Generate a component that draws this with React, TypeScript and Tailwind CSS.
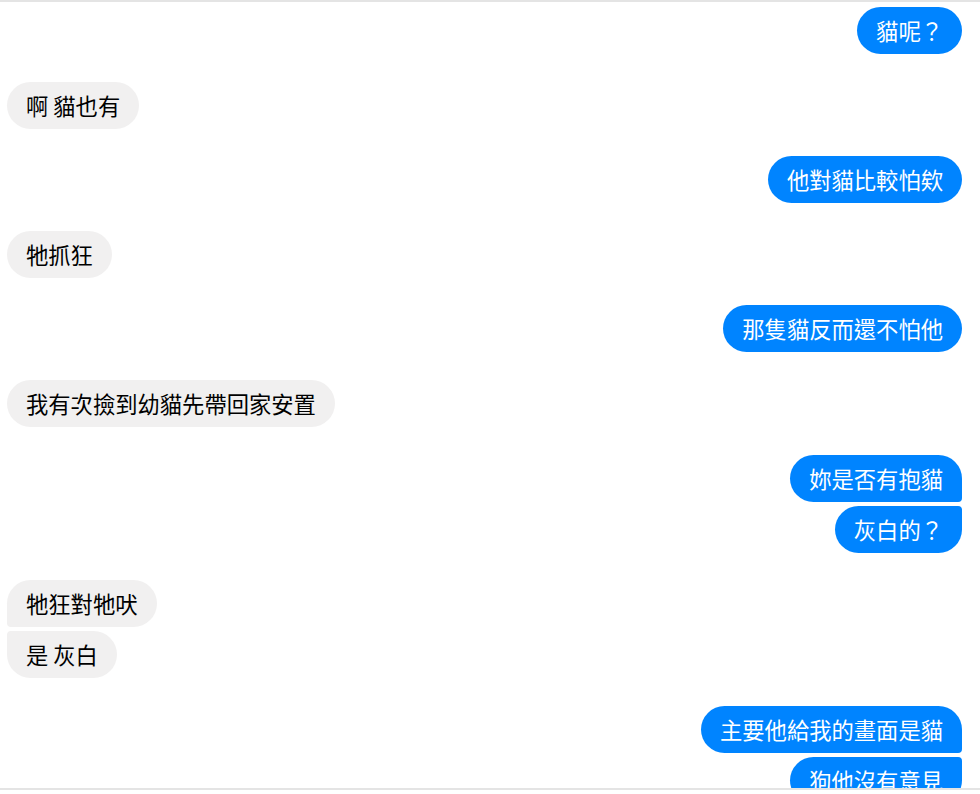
import React from "react";

type Msg = { me: boolean; lines: string[] };

const groups: Msg[] = [
  { me: true, lines: ["貓呢？"] },
  { me: false, lines: ["啊 貓也有"] },
  { me: true, lines: ["他對貓比較怕欸"] },
  { me: false, lines: ["牠抓狂"] },
  { me: true, lines: ["那隻貓反而還不怕他"] },
  { me: false, lines: ["我有次撿到幼貓先帶回家安置"] },
  { me: true, lines: ["妳是否有抱貓", "灰白的？"] },
  { me: false, lines: ["牠狂對牠吠", "是 灰白"] },
  { me: true, lines: ["主要他給我的畫面是貓", "狗他沒有意見"] },
];

function Bubble({ me, text, first, last }: { me: boolean; text: string; first: boolean; last: boolean }) {
  // corners that touch another bubble in the same group are squared off
  const corners = me
    ? `${first ? "rounded-tr-[24px]" : "rounded-tr-[4px]"} ${last ? "rounded-br-[24px]" : "rounded-br-[4px]"}`
    : `${first ? "rounded-tl-[24px]" : "rounded-tl-[4px]"} ${last ? "rounded-bl-[24px]" : "rounded-bl-[4px]"}`;
  return (
    <div
      className={`h-[47px] shrink-0 flex items-center px-[19px] rounded-[24px] ${corners} text-[22.3px] leading-[27px] whitespace-nowrap ${
        me ? "self-end bg-[#0084ff] text-white" : "self-start bg-[#f1f0f0] text-black"
      }`}
    >
      {text}
    </div>
  );
}

export default function App() {
  return (
    <div
      className="w-[980px] h-[794px] bg-white overflow-hidden"
      style={{ fontFamily: '"Noto Sans CJK TC", "Noto Sans", sans-serif' }}
    >
      <div className="h-[790px] border-t-2 border-b-2 border-[#e4e4e4] overflow-hidden">
        <div className="flex flex-col gap-[27.6px] pt-[5px] pl-[7px] pr-[18px]">
          {groups.map((g, i) => (
            <div key={i} className="flex flex-col gap-[4px]">
              {g.lines.map((t, j) => (
                <Bubble key={j} me={g.me} text={t} first={j === 0} last={j === g.lines.length - 1} />
              ))}
            </div>
          ))}
        </div>
      </div>
    </div>
  );
}
